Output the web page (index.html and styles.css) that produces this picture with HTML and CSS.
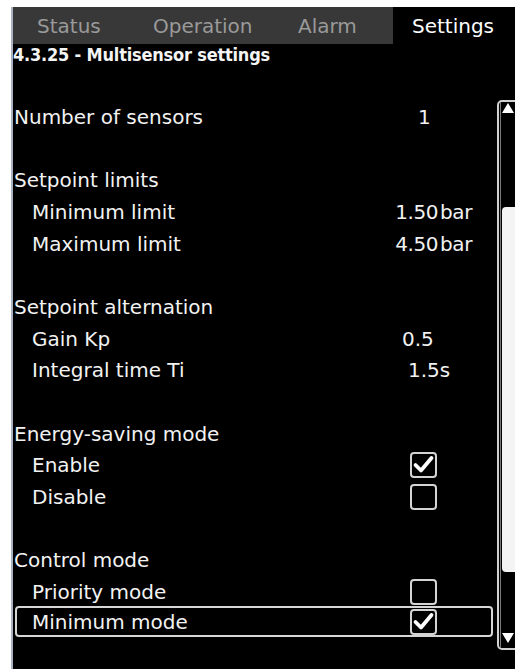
FILE: index.html
```html
<!DOCTYPE html>
<html lang="en">
<head>
<meta charset="utf-8">
<title>Multisensor settings</title>
<link rel="stylesheet" href="styles.css">
</head>
<body>
<div class="screen">
  <nav class="tabs">
    <div class="tab-group">
      <span class="tab tab-status">Status</span>
      <span class="tab tab-operation">Operation</span>
      <span class="tab tab-alarm">Alarm</span>
    </div>
    <span class="tab tab-active">Settings</span>
  </nav>
  <h1 class="title">4.3.25 - Multisensor settings</h1>
  <div class="content">
    <div class="list">
      <section class="group">
        <div class="row"><span class="label">Number of sensors</span><span class="value v-count">1</span></div>
      </section>
      <section class="group">
        <div class="row"><span class="label">Setpoint limits</span></div>
        <div class="row sub"><span class="label">Minimum limit</span><span class="value v-bar">1.50 bar</span></div>
        <div class="row sub"><span class="label">Maximum limit</span><span class="value v-bar">4.50 bar</span></div>
      </section>
      <section class="group">
        <div class="row"><span class="label">Setpoint alternation</span></div>
        <div class="row sub"><span class="label">Gain Kp</span><span class="value v-gain">0.5</span></div>
        <div class="row sub"><span class="label">Integral time Ti</span><span class="value v-time">1.5s</span></div>
      </section>
      <section class="group">
        <div class="row"><span class="label">Energy-saving mode</span></div>
        <div class="row sub"><span class="label">Enable</span><span class="value v-check"><span class="check"><svg viewBox="0 0 23 22" width="23" height="22"><path d="M3.5 11 L9 16.5 L19.5 4" fill="none" stroke="#fff" stroke-width="3.8" stroke-linecap="round" stroke-linejoin="round"/></svg></span></span></div>
        <div class="row sub"><span class="label">Disable</span><span class="value v-check"><span class="check"></span></span></div>
      </section>
      <section class="group">
        <div class="row"><span class="label">Control mode</span></div>
        <div class="row sub"><span class="label">Priority mode</span><span class="value v-check"><span class="check"></span></span></div>
        <div class="row sub selected"><span class="label">Minimum mode</span><span class="value v-check"><span class="check"><svg viewBox="0 0 23 22" width="23" height="22"><path d="M3.5 11 L9 16.5 L19.5 4" fill="none" stroke="#fff" stroke-width="3.8" stroke-linecap="round" stroke-linejoin="round"/></svg></span></span></div>
      </section>
    </div>
    <div class="scrollbar">
      <div class="scroll-inner">
        <span class="arrow arrow-up"></span>
        <div class="track"><div class="thumb"></div></div>
        <span class="arrow arrow-down"></span>
      </div>
    </div>
  </div>
</div>
</body>
</html>
```
FILE: styles.css
```css
html, body {
  margin: 0;
  height: 100%;
  background: #fff;
  overflow: hidden;
}

.screen {
  margin: 7px 0 0 11px;
  border-left: 2px solid #aab2c2;
  background: #000;
  height: 662px;
  color: #f2f2f2;
  font-family: "DejaVu Sans", "Liberation Sans", sans-serif;
  font-size: 20px;
  display: flex;
  flex-direction: column;
}

/* tab bar */
.tabs {
  display: flex;
  height: 37px;
}

.tab-group {
  display: flex;
  background: #383838;
}

.tab {
  box-sizing: border-box;
  display: flex;
  align-items: center;
  padding-left: 24px;
  color: #9a9a9a;
}

.tab-status { width: 116px; }
.tab-operation { width: 145px; }
.tab-alarm { width: 119px; }

.tab-active {
  color: #fff;
  padding-left: 19px;
}

/* page heading */
.title {
  margin: 0;
  height: 22px;
  line-height: 22px;
  font-family: "DejaVu Sans Condensed", "DejaVu Sans", sans-serif;
  font-stretch: condensed;
  font-size: 18px;
  font-weight: bold;
  letter-spacing: -0.2px;
  color: #f4f4f4;
}

/* settings list */
.content {
  display: flex;
  margin-top: 34px;
}

.list {
  width: 482px;
  flex-shrink: 0;
  padding-top: 1px;
}

.group + .group {
  margin-top: 31.7px;
}

.row {
  display: grid;
  grid-template-columns: 375px 84px;
  align-items: center;
  height: 31.7px;
  box-sizing: border-box;
}

.label {
  padding-left: 1px;
  white-space: nowrap;
}

.sub .label {
  padding-left: 19px;
}

.value {
  display: flex;
  align-items: center;
  white-space: nowrap;
}

.v-count { padding-left: 30px; }
.v-bar { justify-content: flex-end; word-spacing: -4px; letter-spacing: -0.4px; }
.v-gain { padding-left: 14px; }
.v-time { padding-left: 20px; }
.v-check { padding-left: 22px; }

.row.selected {
  margin: -2px 2px 0;
  height: 31px;
  border: 2px solid #d6d6d6;
  border-radius: 4px;
  grid-template-columns: 371px 84px;
}

.row.selected .label {
  padding-left: 15px;
}

.check {
  box-sizing: border-box;
  width: 27px;
  height: 26px;
  border: 2px solid #d4d4d4;
  border-radius: 4px;
  display: flex;
  align-items: center;
  justify-content: center;
}

.check svg {
  display: block;
}

/* scrollbar */
.scrollbar {
  box-sizing: border-box;
  flex-shrink: 0;
  width: 24px;
  height: 550px;
  margin-left: 2px;
  border: 2px solid #d0d0d0;
  border-radius: 5px;
  display: flex;
}

.scroll-inner {
  flex: 1;
  margin-left: 1px;
  padding-left: 1px;
  border-left: 1px solid #7a7a7a;
  display: flex;
  flex-direction: column;
}

.arrow {
  width: 0;
  height: 0;
  border-left: 6px solid transparent;
  border-right: 6px solid transparent;
}

.arrow-up {
  margin-top: 1px;
  border-bottom: 10px solid #fff;
}

.arrow-down {
  margin-bottom: 5px;
  border-top: 10px solid #fff;
}

.track {
  flex: 1;
}

.thumb {
  margin-top: 94px;
  height: 365px;
  background: #f4f4f4;
  border-radius: 4px 0 0 4px;
}
```
